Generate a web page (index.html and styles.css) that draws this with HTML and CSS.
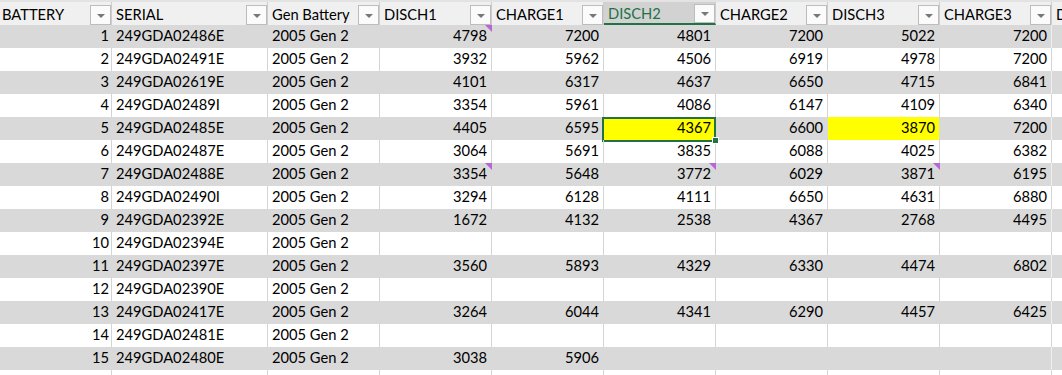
FILE: index.html
```html
<!DOCTYPE html>
<html>
<head>
<meta charset="utf-8">
<link rel="stylesheet" href="styles.css">
</head>
<body>
<div class="sheet">
  <div class="hrow">
    <div class="hcell first"><span class="htext">BATTERY</span><span class="dd"></span></div>
    <div class="hcell"><span class="htext">SERIAL</span><span class="dd"></span></div>
    <div class="hcell"><span class="htext">Gen Battery</span><span class="dd"></span></div>
    <div class="hcell"><span class="htext">DISCH1</span><span class="dd"></span></div>
    <div class="hcell"><span class="htext">CHARGE1</span><span class="dd"></span></div>
    <div class="hcell active"><span class="htext">DISCH2</span><span class="dd"></span></div>
    <div class="hcell"><span class="htext">CHARGE2</span><span class="dd"></span></div>
    <div class="hcell"><span class="htext">DISCH3</span><span class="dd"></span></div>
    <div class="hcell"><span class="htext">CHARGE3</span><span class="dd"></span></div>
    <div class="hcell"><span class="htext">DISCH4</span><span class="dd"></span></div>
  </div>

  <div class="row band">
    <div class="c num">1</div><div class="c">249GDA02486E</div><div class="c">2005 Gen 2</div>
    <div class="c num note">4798</div><div class="c num">7200</div><div class="c num">4801</div><div class="c num">7200</div><div class="c num">5022</div><div class="c num">7200</div><div class="c"></div>
  </div>
  <div class="row">
    <div class="c num">2</div><div class="c">249GDA02491E</div><div class="c">2005 Gen 2</div>
    <div class="c num">3932</div><div class="c num">5962</div><div class="c num">4506</div><div class="c num">6919</div><div class="c num">4978</div><div class="c num">7200</div><div class="c"></div>
  </div>
  <div class="row band">
    <div class="c num">3</div><div class="c">249GDA02619E</div><div class="c">2005 Gen 2</div>
    <div class="c num">4101</div><div class="c num">6317</div><div class="c num">4637</div><div class="c num">6650</div><div class="c num">4715</div><div class="c num">6841</div><div class="c"></div>
  </div>
  <div class="row">
    <div class="c num">4</div><div class="c">249GDA02489I</div><div class="c">2005 Gen 2</div>
    <div class="c num">3354</div><div class="c num">5961</div><div class="c num">4086</div><div class="c num">6147</div><div class="c num">4109</div><div class="c num">6340</div><div class="c"></div>
  </div>
  <div class="row band">
    <div class="c num">5</div><div class="c">249GDA02485E</div><div class="c">2005 Gen 2</div>
    <div class="c num">4405</div><div class="c num">6595</div><div class="c num yellow selected">4367</div><div class="c num">6600</div><div class="c num yellow">3870</div><div class="c num">7200</div><div class="c"></div>
  </div>
  <div class="row">
    <div class="c num">6</div><div class="c">249GDA02487E</div><div class="c">2005 Gen 2</div>
    <div class="c num">3064</div><div class="c num">5691</div><div class="c num">3835</div><div class="c num">6088</div><div class="c num">4025</div><div class="c num">6382</div><div class="c"></div>
  </div>
  <div class="row band">
    <div class="c num">7</div><div class="c">249GDA02488E</div><div class="c">2005 Gen 2</div>
    <div class="c num note">3354</div><div class="c num">5648</div><div class="c num note">3772</div><div class="c num">6029</div><div class="c num note">3871</div><div class="c num">6195</div><div class="c"></div>
  </div>
  <div class="row">
    <div class="c num">8</div><div class="c">249GDA02490I</div><div class="c">2005 Gen 2</div>
    <div class="c num">3294</div><div class="c num">6128</div><div class="c num">4111</div><div class="c num">6650</div><div class="c num">4631</div><div class="c num">6880</div><div class="c"></div>
  </div>
  <div class="row band">
    <div class="c num">9</div><div class="c">249GDA02392E</div><div class="c">2005 Gen 2</div>
    <div class="c num">1672</div><div class="c num">4132</div><div class="c num">2538</div><div class="c num">4367</div><div class="c num">2768</div><div class="c num">4495</div><div class="c"></div>
  </div>
  <div class="row">
    <div class="c num">10</div><div class="c">249GDA02394E</div><div class="c">2005 Gen 2</div>
    <div class="c"></div><div class="c"></div><div class="c"></div><div class="c"></div><div class="c"></div><div class="c"></div><div class="c"></div>
  </div>
  <div class="row band">
    <div class="c num">11</div><div class="c">249GDA02397E</div><div class="c">2005 Gen 2</div>
    <div class="c num">3560</div><div class="c num">5893</div><div class="c num">4329</div><div class="c num">6330</div><div class="c num">4474</div><div class="c num">6802</div><div class="c"></div>
  </div>
  <div class="row">
    <div class="c num">12</div><div class="c">249GDA02390E</div><div class="c">2005 Gen 2</div>
    <div class="c"></div><div class="c"></div><div class="c"></div><div class="c"></div><div class="c"></div><div class="c"></div><div class="c"></div>
  </div>
  <div class="row band">
    <div class="c num">13</div><div class="c">249GDA02417E</div><div class="c">2005 Gen 2</div>
    <div class="c num">3264</div><div class="c num">6044</div><div class="c num">4341</div><div class="c num">6290</div><div class="c num">4457</div><div class="c num">6425</div><div class="c"></div>
  </div>
  <div class="row">
    <div class="c num">14</div><div class="c">249GDA02481E</div><div class="c">2005 Gen 2</div>
    <div class="c"></div><div class="c"></div><div class="c"></div><div class="c"></div><div class="c"></div><div class="c"></div><div class="c"></div>
  </div>
  <div class="row band">
    <div class="c num">15</div><div class="c">249GDA02480E</div><div class="c">2005 Gen 2</div>
    <div class="c num">3038</div><div class="c num">5906</div><div class="c"></div><div class="c"></div><div class="c"></div><div class="c"></div><div class="c"></div>
  </div>
  <div class="row">
    <div class="c"></div><div class="c"></div><div class="c"></div><div class="c"></div><div class="c"></div><div class="c"></div><div class="c"></div><div class="c"></div><div class="c"></div><div class="c"></div>
  </div>
</div>
</body>
</html>
```

FILE: styles.css
```css
html, body {
  margin: 0;
  padding: 0;
  background: #ffffff;
  overflow: hidden;
}

.sheet {
  width: 1200px;
  font-family: Lato, "Liberation Sans", sans-serif;
  font-size: 14.7px;
  color: #000000;
}

.hrow, .row {
  display: grid;
  grid-template-columns: 112px 156px 112px 112px 112px 112px 112px 112px 112px 112px;
}

.hrow {
  height: 25px;
  background: #f0f0f0;
  border-top: 2px solid #e3e3e3;
  box-sizing: border-box;
}

.hcell {
  position: relative;
  display: flex;
  align-items: center;
  justify-content: space-between;
  border-right: 1px solid #cdcdcd;
  box-sizing: border-box;
  height: 23px;
  padding-left: 4px;
}

.hcell.first {
  padding-left: 2px;
}

.hcell.active {
  background: #d2d2d2;
  color: #217346;
  border-bottom: 2px solid #217346;
}

.htext {
  line-height: 20px;
  padding-top: 1px;
  white-space: nowrap;
}

.dd {
  align-self: flex-end;
  width: 21px;
  height: 20px;
  box-sizing: border-box;
  border: 1px solid #bdbdbd;
  background: #fbfbfb;
  display: flex;
  align-items: center;
  justify-content: center;
  flex: none;
}

.hcell.active .dd {
  height: 19px;
  margin-bottom: -1px;
  align-self: flex-start;
  margin-top: 2px;
}

.dd::after {
  content: "";
  width: 0;
  height: 0;
  border-left: 4px solid transparent;
  border-right: 4px solid transparent;
  border-top: 4px solid #777777;
  margin-top: 1px;
}

.row {
  height: 23px;
}

.row.band {
  background: #d9d9d9;
}

.c {
  position: relative;
  border-right: 1px solid #d4d4d4;
  box-sizing: border-box;
  padding: 0 4px 2px 4px;
  line-height: 21px;
  white-space: nowrap;
  overflow: visible;
  display: flex;
  align-items: flex-end;
}

.row.band .c {
  border-right-color: #d9d9d9;
}

.row .c:nth-child(9) {
  border-right-color: #d4d4d4;
}

.row.band .c:nth-child(9) {
  border-right-color: #f0f0f0;
}

.c.num {
  justify-content: flex-end;
  padding-right: 4px;
}

.row .c:first-child.num {
  padding-right: 2px;
}

.c.yellow {
  background: #ffff00;
}

.c.note::after {
  content: "";
  position: absolute;
  top: 0;
  right: -1px;
  width: 0;
  height: 0;
  border-left: 7px solid transparent;
  border-top: 7px solid #b767d3;
}

.c.selected::before {
  content: "";
  position: absolute;
  left: -2px;
  top: 0;
  right: -1px;
  bottom: -2px;
  border: 2px solid #217346;
  pointer-events: none;
}

.c.selected::after {
  content: "";
  position: absolute;
  right: -4px;
  bottom: -4px;
  width: 5px;
  height: 5px;
  background: #217346;
  border: 1px solid #ffffff;
  box-sizing: content-box;
  z-index: 2;
}
```
